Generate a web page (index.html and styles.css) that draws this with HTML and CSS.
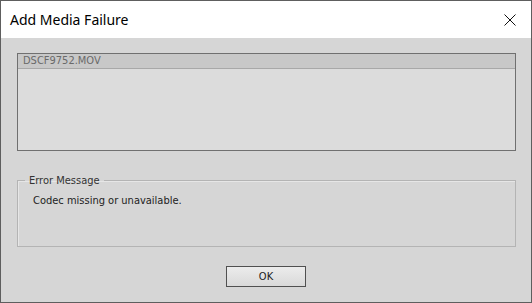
FILE: index.html
```html
<!DOCTYPE html>
<html>
<head>
<meta charset="utf-8">
<link rel="stylesheet" href="styles.css">
</head>
<body>
<div class="window">
  <div class="titlebar">
    <span class="title">Add Media Failure</span>
    <svg class="close" width="12" height="12" viewBox="0 0 12 12"><path d="M0.5 0.5 L11.5 11.5 M11.5 0.5 L0.5 11.5" stroke="#111" stroke-width="1"/></svg>
  </div>
  <div class="content">
    <div class="list">
      <div class="list-row">DSCF9752.MOV</div>
    </div>
    <fieldset class="group">
      <legend>Error Message</legend>
      <div class="msg">Codec missing or unavailable.</div>
    </fieldset>
    <div class="buttons">
      <button class="ok">OK</button>
    </div>
  </div>
</div>
</body>
</html>
```
FILE: styles.css
```css
html, body { margin: 0; padding: 0; }
body { width: 532px; height: 303px; overflow: hidden; background: #d6d6d6; }
.window {
  box-sizing: border-box;
  width: 532px; height: 303px;
  border: 1px solid #5e5e5e;
  display: flex; flex-direction: column;
  background: #d6d6d6;
}
.titlebar {
  height: 37px; background: #fff;
  display: flex; align-items: center; justify-content: space-between;
  padding: 0 15px 0 9px;
}
.title { font-family: "Noto Sans", "Open Sans", sans-serif; font-size: 14px; color: #000; }
.close { display: block; }
.content {
  flex: 1;
  padding: 15px 15px 0 16px;
  display: flex; flex-direction: column;
  font-family: "DejaVu Sans Condensed", "DejaVu Sans", sans-serif; font-stretch: condensed; font-size: 11px;
}
.list {
  height: 96px;
  border: 1px solid #707070;
  background: #dcdcdc;
}
.list-row {
  height: 14px; line-height: 14px;
  background: #c8c8c8;
  border-bottom: 1px solid #a8a8a8;
  color: #6a6a6a; padding-left: 5px;
}
.group {
  margin: 23px 0 0 0;
  padding: 7px 0 0 0;
  height: 64px;
  border: 1px solid #b4b4b4;
  box-shadow: inset 1px 1px 0 #e6e6e6;
}
.group legend { padding: 0 4px; margin-left: 7px; color: #333; }
.msg { color: #222; padding-left: 15px; }
.buttons { display: flex; justify-content: center; padding-top: 19px; }
.ok {
  width: 80px; height: 21px;
  border: 1px solid #505050;
  background: linear-gradient(#ececec, #d9d9d9);
  font-family: "DejaVu Sans Condensed", "DejaVu Sans", sans-serif; font-stretch: condensed; font-size: 11px; color: #222;
  padding: 0; margin-right: 1px;
}
```
